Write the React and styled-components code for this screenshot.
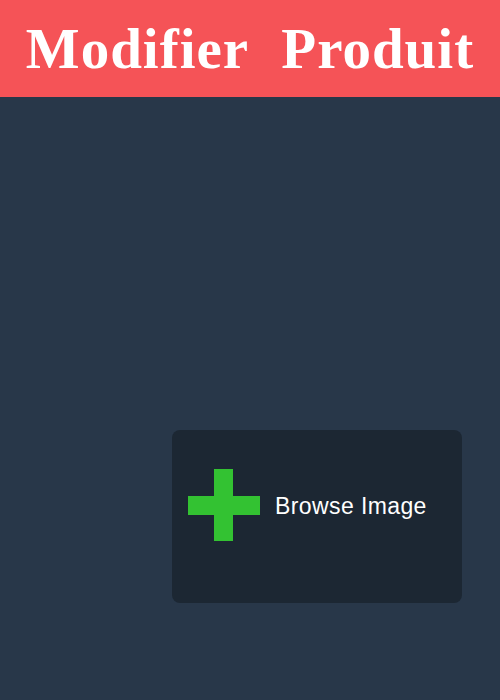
import React from 'react';
import styled, { createGlobalStyle } from 'styled-components';

const Global = createGlobalStyle`
  html, body {
    margin: 0;
    padding: 0;
    background-color: #283749;
  }
  #root {
    min-height: 700px;
  }
`;

const Page = styled.div`
  display: flex;
  flex-direction: column;
  min-height: 700px;
  background-color: #283749;
`;

const Header = styled.header`
  display: flex;
  align-items: center;
  justify-content: center;
  height: 97px;
  background-color: #f55357;
`;

const Title = styled.h1`
  margin: 0;
  font-family: 'Liberation Serif', 'DejaVu Serif', serif;
  font-weight: bold;
  font-size: 57px;
  letter-spacing: 1px;
  word-spacing: 18px;
  color: #ffffff;
`;

const Main = styled.main`
  display: flex;
  justify-content: flex-end;
  padding: 333px 38px 0 0;
`;

const Card = styled.div`
  display: flex;
  align-items: flex-start;
  gap: 15px;
  box-sizing: border-box;
  width: 290px;
  height: 173px;
  padding: 39px 16px 0;
  border-radius: 8px;
  background-color: #1c2733;
  cursor: pointer;
`;

const Label = styled.span`
  margin-top: 24px;
  font-family: 'Liberation Sans', Arial, sans-serif;
  font-size: 23px;
  letter-spacing: 0.4px;
  color: #ffffff;
`;

const Plus = () => (
  <svg width="72" height="72" viewBox="0 0 72 72">
    <rect x="26" y="0" width="19" height="72" fill="#33c232" />
    <rect x="0" y="27" width="72" height="19" fill="#33c232" />
  </svg>
);

export default function App() {
  return (
    <>
      <Global />
      <Page>
        <Header>
          <Title>Modifier Produit</Title>
        </Header>
        <Main>
          <Card>
            <Plus />
            <Label>Browse Image</Label>
          </Card>
        </Main>
      </Page>
    </>
  );
}
